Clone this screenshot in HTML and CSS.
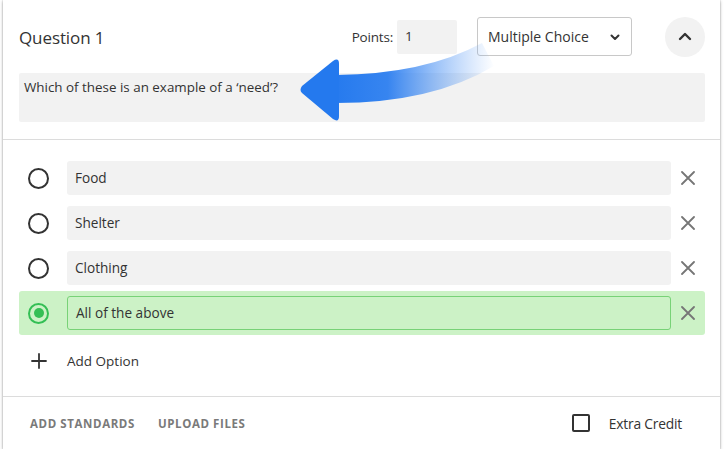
FILE: index.html
```html
<!DOCTYPE html>
<html lang="en">
<head>
<meta charset="utf-8">
<title>Question 1</title>
<link rel="stylesheet" href="styles.css">
</head>
<body>
<div class="card">
  <section class="head">
    <div class="head-row">
      <h2 class="title">Question 1</h2>
      <label class="points-label">Points:</label>
      <div class="points-input">1</div>
      <div class="select">
        <span>Multiple Choice</span>
        <svg class="chev-down" width="10" height="7" viewBox="0 0 10 7"><path d="M1.5 1.5 L5 5 L8.5 1.5" fill="none" stroke="#333" stroke-width="2" stroke-linecap="round" stroke-linejoin="round"/></svg>
      </div>
      <button class="collapse">
        <svg width="14" height="9" viewBox="0 0 14 9"><path d="M2 7 L7 2 L12 7" fill="none" stroke="#333" stroke-width="2.4" stroke-linecap="round" stroke-linejoin="round"/></svg>
      </button>
    </div>
    <div class="question">Which of these is an example of a ‘need’?</div>
    <svg class="arrow" width="220" height="100" viewBox="290 30 220 100">
      <defs>
        <linearGradient id="fade" x1="330" y1="0" x2="495" y2="0" gradientUnits="userSpaceOnUse">
          <stop offset="0" stop-color="#2479ee" stop-opacity="1"/>
          <stop offset="0.35" stop-color="#2d7ff0" stop-opacity="0.95"/>
          <stop offset="1" stop-color="#5c9cf5" stop-opacity="0"/>
        </linearGradient>
      </defs>
      <path d="M336 75 Q425 74 482 43 L494 66 Q432 103 336 103 Z" fill="url(#fade)"/>
      <path d="M302 86 Q299 90 302 93 L333 119 Q339 123 339 116 L339 64 Q339 57 333 61 Z" fill="#2479ee"/>
    </svg>
  </section>

  <section class="options">
    <div class="opt">
      <span class="radio"></span>
      <div class="opt-input">Food</div>
      <span class="remove"><svg width="14" height="14" viewBox="0 0 14 14"><path d="M1 1 L13 13 M13 1 L1 13" stroke="#767676" stroke-width="1.8" stroke-linecap="round"/></svg></span>
    </div>
    <div class="opt">
      <span class="radio"></span>
      <div class="opt-input">Shelter</div>
      <span class="remove"><svg width="14" height="14" viewBox="0 0 14 14"><path d="M1 1 L13 13 M13 1 L1 13" stroke="#767676" stroke-width="1.8" stroke-linecap="round"/></svg></span>
    </div>
    <div class="opt">
      <span class="radio"></span>
      <div class="opt-input">Clothing</div>
      <span class="remove"><svg width="14" height="14" viewBox="0 0 14 14"><path d="M1 1 L13 13 M13 1 L1 13" stroke="#767676" stroke-width="1.8" stroke-linecap="round"/></svg></span>
    </div>
    <div class="opt opt-correct">
      <span class="radio radio-on"><span class="dot"></span></span>
      <div class="opt-input">All of the above</div>
      <span class="remove"><svg width="14" height="14" viewBox="0 0 14 14"><path d="M1 1 L13 13 M13 1 L1 13" stroke="#767676" stroke-width="1.8" stroke-linecap="round"/></svg></span>
    </div>
    <div class="add">
      <span class="plus"><svg width="16" height="16" viewBox="0 0 16 16"><path d="M8 1 V15 M1 8 H15" stroke="#333" stroke-width="1.8" stroke-linecap="round"/></svg></span>
      <span>Add Option</span>
    </div>
  </section>

  <footer class="foot">
    <span class="link">ADD STANDARDS</span>
    <span class="link">UPLOAD FILES</span>
    <span class="spacer"></span>
    <span class="check"></span>
    <span class="extra">Extra Credit</span>
  </footer>
</div>
</body>
</html>
```

FILE: styles.css
```css
* { box-sizing: border-box; }
html, body { margin: 0; padding: 0; background: #fff; }
body {
  font-family: "Open Sans", "Liberation Sans", sans-serif;
  color: #333;
}
.card {
  width: 717px;
  height: 449px;
  margin-left: 3px;
  background: #fff;
  box-shadow: 0 1px 3px rgba(0,0,0,0.35), 0 0 1px rgba(0,0,0,0.25);
  display: flex;
  flex-direction: column;
}
.head {
  position: relative;
  padding: 17px 15px 17px 16px;
  border-bottom: 1px solid #dcdcdc;
}
.head-row {
  display: flex;
  align-items: center;
  height: 40px;
}
.title {
  margin: 0;
  font-size: 17px;
  font-weight: 400;
  color: #333;
  flex: 1;
  letter-spacing: -0.1px;
}
.points-label {
  font-size: 13.5px;
  margin-right: 4px;
  letter-spacing: -0.2px;
}
.points-input {
  width: 60px;
  height: 34px;
  background: #f2f2f2;
  border-radius: 2px;
  font-size: 13.5px;
  padding: 7px 8px;
  margin-right: 20px;
}
.select {
  width: 155px;
  height: 39px;
  border: 1px solid #c8c8c8;
  border-radius: 3px;
  display: flex;
  align-items: center;
  justify-content: space-between;
  padding: 0 11px 0 10px;
  font-size: 14px;
  margin-top: -1px;
}
.chev-down { margin-top: 2px; }
.collapse {
  width: 40px;
  height: 40px;
  border-radius: 50%;
  border: none;
  background: #f2f2f2;
  margin-left: 33px;
  display: flex;
  align-items: center;
  justify-content: center;
  padding: 0 0 2px 0;
}
.question {
  margin-top: 16px;
  height: 49px;
  background: #f2f2f2;
  border-radius: 2px;
  font-size: 13.4px;
  padding: 5px 5px;
  line-height: 18px;
}
.arrow {
  position: absolute;
  left: 287px;
  top: 30px;
}
.options {
  padding: 16px 15px 0 16px;
  display: flex;
  flex-direction: column;
  gap: 1px;
  flex: 1;
  border-bottom: 1px solid #dcdcdc;
}
.opt {
  height: 44px;
  display: flex;
  align-items: center;
  padding: 5px 0;
  border-radius: 3px;
}
.radio {
  width: 21px;
  height: 21px;
  border: 2px solid #333;
  border-radius: 50%;
  margin-left: 9px;
  margin-right: 18px;
  flex: none;
  display: flex;
  align-items: center;
  justify-content: center;
}
.radio-on { border-color: #34bf55; border-width: 2.5px; }
.dot {
  width: 10px;
  height: 10px;
  border-radius: 50%;
  background: #34bf55;
}
.opt-input {
  flex: 1;
  height: 34px;
  background: #f2f2f2;
  border-radius: 3px;
  font-size: 13.6px;
  padding: 8px 8px;
  line-height: 18px;
}
.opt-correct { background: #ccf2c6; }
.opt-correct .opt-input {
  background: #ccf2c6;
  border: 1px solid #78d277;
  padding: 7px 8px;
}
.remove {
  width: 34px;
  display: flex;
  justify-content: center;
  align-items: center;
}
.add {
  display: flex;
  align-items: center;
  height: 44px;
  margin-top: 3px;
  font-size: 13.5px;
}
.plus {
  width: 16px;
  height: 16px;
  margin-left: 12px;
  margin-right: 20px;
  display: flex;
}
.foot {
  height: 52px;
  display: flex;
  align-items: center;
  padding: 0 38px 0 27px;
}
.link {
  font-size: 11.5px;
  font-weight: 700;
  letter-spacing: 0.6px;
  color: #7a7a7a;
  margin-right: 23px;
}
.spacer { flex: 1; }
.check {
  width: 18px;
  height: 18px;
  border: 2px solid #333;
  border-radius: 2px;
  margin-right: 19px;
}
.extra { font-size: 13.8px; letter-spacing: -0.2px; }
```
